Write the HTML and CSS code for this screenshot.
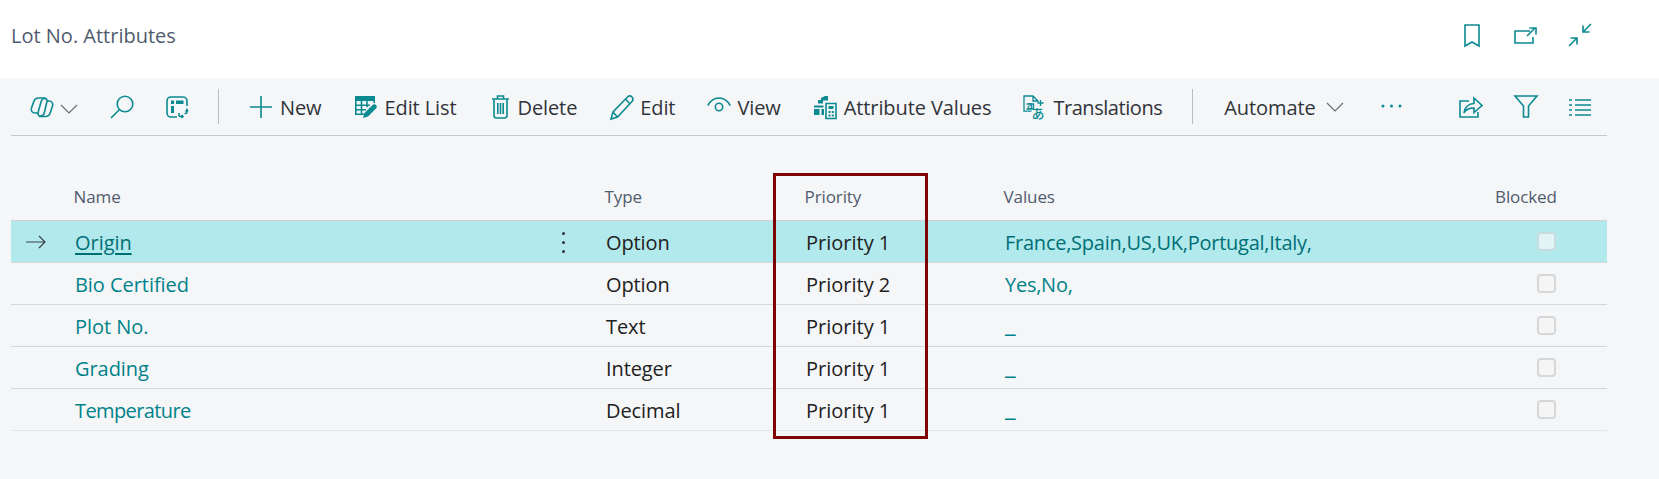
FILE: index.html
```html
<!DOCTYPE html>
<html lang="en">
<head>
<meta charset="utf-8">
<title>Lot No. Attributes</title>
<link rel="stylesheet" href="styles.css">
</head>
<body>
<header class="titlebar">
  <h1 class="title">Lot No. Attributes</h1>
  <div class="title-actions">
    <svg class="ic i-book" viewBox="0 0 16 23"><path d="M1 1h14v21l-7-4-7 4z"/></svg>
    <svg class="ic i-pop" viewBox="0 0 23 17"><path d="M16 4H1v12h18v-6M13 9l8-8M15.500 1H22v6.500"/></svg>
    <svg class="ic i-col" viewBox="0 0 24 24"><path d="M23 1l-8 8M15 2.500V9h6.500M1 23l8-8M2.500 15H9v6.500"/></svg>
  </div>
</header>

<nav class="toolbar">
  <svg class="ic i-copilot" viewBox="0 0 24 22"><path d="M15 2H8.500C6 2 4.500 3.500 3.800 5.500L1.500 12C.5 15 2.500 17 5 17h3.500"/><path d="M9 20.500h6.500c2.500 0 4-1.500 4.700-3.500l2.300-7C23.500 7 21.500 5 19 5h-2"/><path d="M11.500 4.500C13 1.500 17.500 1.500 17 5.500l-2.500 10.500C13.500 21 7.500 21.500 8 17c.2-1.500 3.500-12.500 3.500-12.500z"/></svg>
  <svg class="ic-thin i-chev chev-a" viewBox="0 0 18 10"><path d="M1 1l8 8 8-8"/></svg>
  <svg class="ic i-search" viewBox="0 0 24 24"><circle cx="15" cy="9" r="7.800"/><path d="M9.500 14.500L1 23"/></svg>
  <svg class="ic i-split" viewBox="0 0 22 22"><path d="M11 21H5a4 4 0 0 1-4-4V5a4 4 0 0 1 4-4h12a4 4 0 0 1 4 4v5"/><path class="solid" d="M5 4.500h3v3.500H5zM10 4.500h7.500v3.500H10zM5 10h3v7H5z"/><path d="M21 12.500v3.500a1.500 1.500 0 0 1-1.500 1.500h-1M19.500 15.500l1.500-1.500 1 1.500M13 17v2.500a1 1 0 0 0 1 1h3M15.500 19l1.500 1.500-1.500 1.500"/></svg>
  <span class="sep"></span>
  <span class="item">
    <svg class="ic i-plus" viewBox="0 0 22 22"><path d="M0 11h22M11 0v22"/></svg>New
  </span>
  <span class="item shift-1">
    <svg class="ic i-editlist" viewBox="0 0 22 22"><path class="solid" d="M0 0h20v5H0z"/><path d="M.8 5v13.200h9M6.500 5v13M12 5v6M0 9.200h15M0 13.800h11M19.200 5v2"/><path class="solid" d="M8 22l1.500-5 8-8c1-1 2.500-1 3.500 0s1 2.500 0 3.500l-8 8z"/></svg>Edit List
  </span>
  <span class="item shift-4">
    <svg class="ic i-trash" viewBox="0 0 17 24"><path d="M0 4h17M2 4v16.500A2.500 2.500 0 0 0 4.500 23h8a2.500 2.500 0 0 0 2.500-2.500V4M5.500 4V1h6v3M5.800 8v11M8.500 8v11M11.200 8v11"/></svg>Delete
  </span>
  <span class="item shift-1 gap-6">
    <svg class="ic i-pencil" viewBox="0 0 24 25"><path d="M1 24l2-7L17.500 2c1.500-1.500 3-1.500 4.500 0s1.300 3 0 4.500L7.500 22zM3 17l4.500 5M15.500 4l4.500 5"/></svg>Edit
  </span>
  <span class="item gap-6">
    <svg class="ic i-eye" viewBox="0 0 24 16"><path d="M.8 8.500C3.500 3.500 7 1 12 1s8.500 2.500 11.200 7.500"/><circle cx="12" cy="10" r="3.700"/></svg>View
  </span>
  <span class="item shift-1 gap-7">
    <svg class="ic i-attr" viewBox="0 0 23 24"><path class="solid" d="M0 10.500h9.500v2H0zM0 14h5.500v6H0zM7.500 14h2.500v6H7.500zM4 8.500V5h3V3l4-2h3v4.500H9v3z"/><path d="M12 8.500h10v15H12z"/><path class="solid" d="M14.500 11h5v3h-5zM14.500 16h2v2h-2zM17.800 16h2v2h-2zM14.500 19.500h2v2h-2zM17.800 19.500h2v2h-2z"/></svg>Attribute Values
  </span>
  <span class="item narrow-label">
    <svg class="ic i-trans" viewBox="0 0 22 24"><path d="M8.500 16.200H1V1h9l5 5v2M10 1v5h5M17.500 5v6M14.500 8h6M3.500 9h7v5h-7"/><text class="glyph-a" x="4" y="14">a</text><text class="glyph-jp" x="8.500" y="22.500">あ</text></svg>Translations
  </span>
  <span class="sep"></span>
  <span class="item chev-item">Automate
    <svg class="ic-thin i-chev" viewBox="0 0 18 10"><path d="M1 1l8 8 8-8"/></svg>
  </span>
  <svg class="i-dots" viewBox="0 0 21 4"><circle cx="2" cy="2" r="1.500"/><circle cx="10.500" cy="2" r="1.500"/><circle cx="19" cy="2" r="1.500"/></svg>
  <div class="tool-right">
    <svg class="ic i-share" viewBox="0 0 24 22"><path d="M10 5H1v16h18v-5M5 17c.5-6 5-9.500 10-9.500V2l8 7.500-8 7V12c-4 0-8 1-10 5z"/></svg>
    <svg class="ic i-filter" viewBox="0 0 24 23"><path d="M1 1h22l-8.500 10v11h-5V11z"/></svg>
    <svg class="ic i-list" viewBox="0 0 22 18"><path d="M0 2h3M6 2h16M0 7h3M6 7h16M0 12h3M6 12h16M0 17h3M6 17h16"/></svg>
  </div>
</nav>

<section class="table">
  <div class="row head">
    <span></span><span>Name</span><span>Type</span><span>Priority</span><span>Values</span><span class="col-blocked">Blocked</span>
  </div>
  <div class="row selected">
    <svg class="arrow" viewBox="0 0 20 14"><path d="M0 7h19M13 1l6 6-6 6"/></svg>
    <span class="name-cell"><a class="link current">Origin</a><span class="kebab"><i></i><i></i><i></i></span></span>
    <span class="type">Option</span><span class="prio">Priority 1</span><a class="link">France,Spain,US,UK,Portugal,Italy,</a><span class="check-cell"><span class="check"></span></span>
  </div>
  <div class="row">
    <span></span><span class="name-cell"><a class="link">Bio Certified</a></span>
    <span class="type">Option</span><span class="prio">Priority 2</span><a class="link">Yes,No,</a><span class="check-cell"><span class="check"></span></span>
  </div>
  <div class="row">
    <span></span><span class="name-cell"><a class="link">Plot No.</a></span>
    <span class="type">Text</span><span class="prio">Priority 1</span><a class="link blank">_</a><span class="check-cell"><span class="check"></span></span>
  </div>
  <div class="row">
    <span></span><span class="name-cell"><a class="link">Grading</a></span>
    <span class="type">Integer</span><span class="prio">Priority 1</span><a class="link blank">_</a><span class="check-cell"><span class="check"></span></span>
  </div>
  <div class="row last">
    <span></span><span class="name-cell"><a class="link tight">Temperature</a></span>
    <span class="type">Decimal</span><span class="prio">Priority 1</span><a class="link blank">_</a><span class="check-cell"><span class="check"></span></span>
  </div>
  <div class="highlight"></div>
</section>
</body>
</html>
```
FILE: styles.css
```css
* { box-sizing: border-box; }
html, body { margin: 0; height: 100%; }
body {
  background: #f5f6f8;
  color: #212121;
  font-family: "Open Sans", "Noto Sans", sans-serif;
  font-size: 20px;
  letter-spacing: -0.25px;
  overflow: hidden;
}
.titlebar {
  height: 78px;
  background: #fff;
  display: flex;
  align-items: center;
  justify-content: space-between;
  padding: 0 67px 8px 11px;
}
.title { margin: 0; font-size: 20px; font-weight: 400; letter-spacing: 0; color: #505c6d; }
.title-actions { display: flex; align-items: center; gap: 31px; }

.ic, .ic-thin { fill: none; stroke: #0b8a91; stroke-width: 1.6; flex: none; display: block; overflow: visible; }
.ic-thin { stroke: #6a6f76; stroke-width: 1.2; }
.solid { fill: #0b8a91; stroke: none; }
.i-book { width: 16px; height: 23px; margin-right: 3px; }
.i-pop { width: 23px; height: 17px; }
.i-col { width: 24px; height: 24px; }

.toolbar {
  height: 58px;
  margin: 0 52px 0 11px;
  padding-left: 19px;
  display: flex;
  align-items: center;
  gap: 32px;
  border-bottom: 1px solid #c6c8cc;
  color: #30343a;
  letter-spacing: -0.1px;
}
.item { display: flex; align-items: center; gap: 8px; white-space: nowrap; padding-top: 1px; }
.shift-1 { margin-left: 1px; }
.shift-4 { margin-left: 4px; }
.gap-6 { gap: 6px; }
.gap-7 { gap: 7px; }
.narrow-label { letter-spacing: -0.45px; }
.sep { width: 1px; height: 35px; background: #b9bcc1; margin: 0 -1px 0 -2px; flex: none; }
.i-copilot { width: 24px; height: 22px; }
.i-chev { width: 18px; height: 10px; }
.chev-a { margin-left: -26px; margin-top: 4px; }
.i-search { width: 24px; height: 24px; }
.i-split { width: 22px; height: 22px; }
.i-plus { width: 22px; height: 22px; }
.i-editlist { width: 22px; height: 22px; }
.i-trash { width: 17px; height: 24px; }
.i-pencil { width: 24px; height: 25px; }
.i-eye { width: 24px; height: 16px; margin-top: -5px; }
.i-attr { width: 23px; height: 24px; }
.i-trans { width: 22px; height: 24px; stroke-width: 1.3; }
.glyph-a { font-family: "Open Sans", sans-serif; font-size: 10px; font-weight: 600; fill: #0b8a91; stroke: none; letter-spacing: 0; }
.glyph-jp { font-family: "Noto Sans CJK JP", sans-serif; font-size: 13px; font-weight: 500; fill: #0b8a91; stroke: none; letter-spacing: 0; }
.chev-item { gap: 10px; }
.i-dots { width: 21px; height: 4px; fill: #0b8a91; flex: none; margin-left: 5px; margin-top: -1px; }
.tool-right { margin-left: auto; padding-right: 16px; display: flex; align-items: center; gap: 31px; }
.i-share { width: 24px; height: 22px; }
.i-filter { width: 24px; height: 23px; }
.i-list { width: 22px; height: 18px; }

.table { position: relative; margin: 24px 52px 0 11px; }
.row {
  display: grid;
  grid-template-columns: 64px 531px 200px 199px 490px 112px;
  align-items: center;
  height: 42px;
  padding-top: 1px;
  border-bottom: 1px solid #d4d6da;
}
.row.last { border-bottom-color: #e3e5e8; }
.head {
  height: 61px;
  padding-top: 13px;
  font-size: 17px;
  letter-spacing: -0.1px;
  color: #505c6d;
  border-bottom-color: #cfd1d5;
  text-indent: -1.5px;
}
.col-blocked { text-indent: 0; }
.selected { background: #b2e9ec; }
.type { letter-spacing: -0.1px; }
.prio { letter-spacing: 0; }
.link { color: #00838a; white-space: nowrap; font-weight: 400; }
.name-cell .link { letter-spacing: -0.05px; }
.name-cell .tight { letter-spacing: -0.6px; }
.blank { font-size: 25px; font-weight: 600; line-height: 1; padding-bottom: 8px; }
.selected .link { color: #006f75; }
.current { text-decoration: underline; text-underline-offset: 3px; }
.arrow { width: 20px; height: 14px; margin-left: 15px; fill: none; stroke: #3c4046; stroke-width: 1.200; }
.name-cell { display: flex; justify-content: space-between; align-items: center; padding-right: 41px; }
.kebab { display: flex; flex-direction: column; gap: 6px; }
.kebab i { width: 3px; height: 3px; border-radius: 50%; background: #30343a; display: block; }
.check-cell { display: flex; padding-left: 42px; }
.check {
  width: 19px;
  height: 19px;
  margin-top: -2px;
  border: 2px solid #d6d7d9;
  border-radius: 4px;
  background: #f5f5f6;
}
.selected .check { background: #e2f4f6; border-color: #c6dcde; }
.highlight {
  position: absolute;
  left: 762px;
  top: 13px;
  width: 155px;
  height: 266px;
  border: 3px solid #7f0505;
}
```
